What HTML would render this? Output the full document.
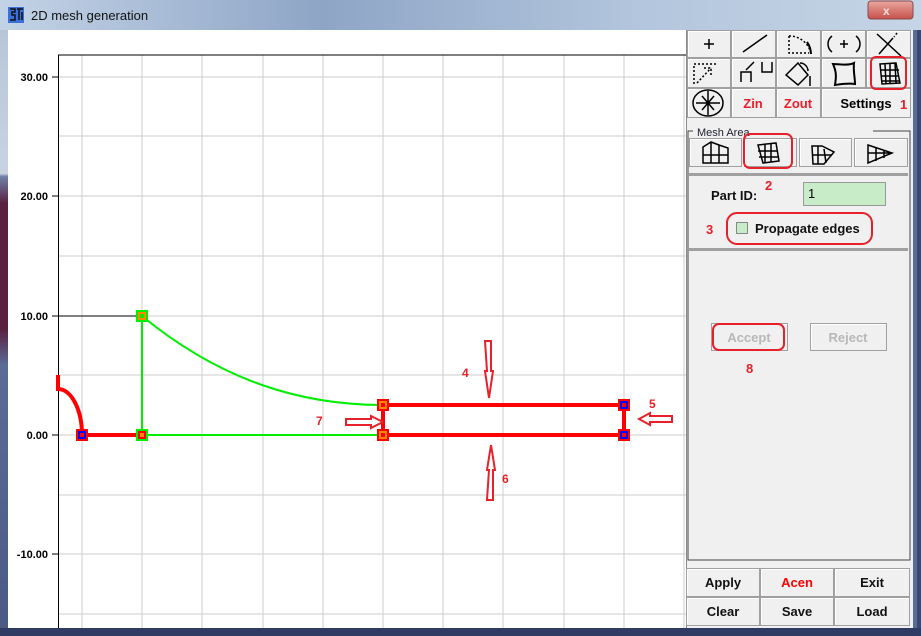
<!DOCTYPE html>
<html><head><meta charset="utf-8"><style>
html,body{margin:0;padding:0;width:921px;height:636px;overflow:hidden;background:#fff}
svg{display:block}
text{font-family:"Liberation Sans",Arial,sans-serif}
.b{fill:#f0f0f0;stroke:#a0a0a0}
.h{stroke:#fff;fill:none}
</style></head><body>
<svg width="921" height="636" viewBox="0 0 921 636" xmlns="http://www.w3.org/2000/svg">
<defs>
<linearGradient id="tb" x1="0" y1="0" x2="1" y2="0">
<stop offset="0" stop-color="#c3d3e6"/><stop offset="0.35" stop-color="#8ea5c6"/><stop offset="0.7" stop-color="#b3c6dd"/><stop offset="1" stop-color="#c6d5e6"/>
</linearGradient>
<linearGradient id="cls" x1="0" y1="0" x2="0" y2="1"><stop offset="0" stop-color="#e8a8a0"/><stop offset="1" stop-color="#c7504a"/></linearGradient>
<linearGradient id="lb" x1="0" y1="0" x2="0" y2="1">
<stop offset="0" stop-color="#b8c6da"/><stop offset="0.24" stop-color="#c8d3e2"/><stop offset="0.245" stop-color="#6f82a8"/><stop offset="0.29" stop-color="#5a2040"/><stop offset="0.5" stop-color="#5a2040"/><stop offset="0.56" stop-color="#5a6c96"/><stop offset="1" stop-color="#4a5a85"/>
</linearGradient>
</defs>
<!-- frame -->
<rect x="0" y="0" width="921" height="636" fill="#2f3b62"/>
<rect x="0" y="0" width="921" height="30" fill="url(#tb)"/>
<rect x="0" y="30" width="8" height="598" fill="url(#lb)"/>
<rect x="913" y="30" width="8" height="598" fill="#5a6c96"/>
<rect x="917" y="30" width="4" height="598" fill="#3a4870"/>
<rect x="0" y="628" width="921" height="8" fill="#2f3b62"/>
<!-- icon -->
<rect x="8" y="7" width="16" height="16" fill="#3d6fd8"/>
<path d="M10 9h5v3h-3v3h3v5h-5M17 9h6M19 9v11M22 12v8" stroke="#111" stroke-width="1.5" fill="none"/>
<text x="31" y="20" font-size="13" fill="#111">2D mesh generation</text>
<rect x="868" y="1" width="45" height="18" rx="3" fill="url(#cls)" stroke="#8a4a4a"/>
<text x="883" y="15" font-size="12" fill="#f4dcdc" font-weight="bold">x</text>
<!-- plot area -->
<rect x="8" y="30" width="678" height="598" fill="#fff"/>
<g stroke="#cccccc" stroke-width="1">
<path d="M82 55V628M142 55V628M202 55V628M263 55V628M323 55V628M383 55V628M443 55V628M503 55V628M564 55V628M624 55V628M684 55V628"/>
<path d="M58 77H686M58 136H686M58 196H686M58 256H686M58 316H686M58 375H686M58 435H686M58 495H686M58 554H686M58 614H686"/>
</g>
<path d="M58.5 55V628M58 55H686" stroke="#000" stroke-width="1"/>
<path d="M52 77H58M52 196H58M52 316H58M52 435H58M52 554H58" stroke="#000"/>
<path d="M58 316H142" stroke="#000"/>
<g font-size="11" font-weight="bold" fill="#000" text-anchor="end">
<text x="48" y="81">30.00</text><text x="48" y="200">20.00</text><text x="48" y="320">10.00</text><text x="48" y="439">0.00</text><text x="48" y="558">-10.00</text>
</g>
<!-- green -->
<path d="M142 316V435H383M142 316C220 380 300 405 383 405" stroke="#00ee00" stroke-width="2" fill="none"/>
<!-- red -->
<path d="M58 375V389A24 46 0 0 1 82 435H142M383 405H624V435H383Z" stroke="#ff0000" stroke-width="4" fill="none"/>
<!-- nodes -->
<rect x="76" y="429" width="12" height="12" fill="#f00"/><rect x="79" y="432" width="6" height="6" fill="none" stroke="#00f" stroke-width="2"/>
<rect x="136" y="429" width="12" height="12" fill="#f00"/><rect x="137" y="430" width="10" height="10" fill="none" stroke="#0e0" stroke-width="2"/><rect x="140" y="433" width="4" height="4" fill="#f80"/>
<rect x="136" y="310" width="12" height="12" fill="#0e0"/><rect x="139" y="313" width="6" height="6" fill="none" stroke="#f80" stroke-width="2"/>
<rect x="377" y="399" width="12" height="12" fill="#f00"/><rect x="380" y="402" width="6" height="6" fill="none" stroke="#f80" stroke-width="2"/>
<rect x="377" y="429" width="12" height="12" fill="#f00"/><rect x="380" y="432" width="6" height="6" fill="none" stroke="#f80" stroke-width="2"/>
<rect x="618" y="399" width="12" height="12" fill="#f00"/><rect x="621" y="402" width="6" height="6" fill="none" stroke="#00f" stroke-width="2"/>
<rect x="618" y="429" width="12" height="12" fill="#f00"/><rect x="621" y="432" width="6" height="6" fill="none" stroke="#00f" stroke-width="2"/>
<!-- arrows -->
<g stroke="#e8202a" stroke-width="2" fill="#fff">
<path d="M485 341h6v30h2l-4 27-4-27h2z"/>
<path d="M487 500h6v-30h2l-4-25-4 25h2z"/>
<path d="M346 419h25v-3l12 6-12 6v-3h-25z"/>
<path d="M672 416h-22v-3l-11 6 11 6v-3h22z"/>
</g>
<g font-size="12" font-weight="bold" fill="#e8202a">
<text x="462" y="377">4</text><text x="649" y="408">5</text><text x="502" y="483">6</text><text x="316" y="425">7</text>
</g>
<!-- right panel -->
<rect x="686" y="30" width="227" height="598" fill="#f0f0f0"/>
<path d="M686.5 30V628" stroke="#888"/>
<g class="b">
<rect x="687.5" y="30.5" width="43" height="27"/><rect x="731.5" y="30.5" width="44" height="27"/><rect x="776.5" y="30.5" width="44" height="27"/><rect x="821.5" y="30.5" width="44" height="27"/><rect x="866.5" y="30.5" width="44" height="27"/>
<rect x="687.5" y="58.5" width="43" height="29"/><rect x="731.5" y="58.5" width="44" height="29"/><rect x="776.5" y="58.5" width="44" height="29"/><rect x="821.5" y="58.5" width="44" height="29"/><rect x="866.5" y="58.5" width="44" height="29"/>
<rect x="687.5" y="88.5" width="43" height="29"/><rect x="731.5" y="88.5" width="44" height="29"/><rect x="776.5" y="88.5" width="44" height="29"/><rect x="821.5" y="88.5" width="89" height="29"/>
</g>
<g class="h">
<path d="M688.5 56V31.5H730M732.5 56V31.5H775M777.5 56V31.5H820M822.5 56V31.5H865M867.5 56V31.5H910"/>
<path d="M688.5 86V59.5H730M732.5 86V59.5H775M777.5 86V59.5H820M822.5 86V59.5H865M867.5 86V59.5H910"/>
<path d="M688.5 116V89.5H730M732.5 116V89.5H775M777.5 116V89.5H820M822.5 116V89.5H910"/>
</g>
<g stroke="#000" stroke-width="1.5" fill="none">
<path d="M704 44h10M709 39v10"/>
<path d="M743 52l24-17"/>
<path d="M789 36a22 22 0 0 1 22 18M789 36v17h20" stroke-dasharray="2 2"/>
<path d="M811 54a22 22 0 0 0-4-12" stroke-width="2"/>
<path d="M832 36a10 10 0 0 0 0 16M856 36a10 10 0 0 1 0 16M840 44h8M844 40v8"/>
<path d="M877 34l24 22M893 38l-14 16" /><path d="M897 33l-3 4" stroke-dasharray="2 2"/>
<path d="M694 84V64h22M697 83l14-15M704 68h7v7" stroke-dasharray="2 2"/>
<path d="M741 82v-10h10v10M746 70l8-8M762 62v10h10v-10"/>
<path d="M786 75l12-12 10 12-10 10zM800 63a8 8 0 0 1 8 8M810 76v10" />
<path d="M833 64c5 0 15 2 21-1-1 8 1 14 1 21-7-1-13 0-20 1 1-7 2-12-2-21z" stroke-width="2"/>
<path d="M693 103a15 13 0 1 0 30 0a15 13 0 1 0-30 0M696 103h24M708 91v24M702 96l12 14M714 96l-12 14"/>
<path d="M880 64l16-1 4 20-18 1zM880 70h19M881 76h18M882 81h17M885 64l1 20M890 63v21M895 63l1 20"/>
</g>
<g font-size="13" font-weight="bold" text-anchor="middle">
<text x="753" y="108" fill="#e8202a">Zin</text><text x="798" y="108" fill="#e8202a">Zout</text><text x="866" y="108" fill="#000">Settings</text>
</g>
<rect x="871" y="57" width="35" height="32" rx="5" fill="none" stroke="#e8202a" stroke-width="2"/>
<text x="900" y="109" font-size="13" font-weight="bold" fill="#e8202a">1</text>
<!-- mesh area -->
<path d="M693 131h-5V560h222V131h-37" stroke="#444" fill="none"/>
<text x="697" y="136" font-size="11" fill="#223">Mesh Area</text>
<g class="b">
<rect x="689.5" y="138.5" width="52" height="28"/><rect x="744.5" y="138.5" width="52" height="28"/><rect x="799.5" y="138.5" width="52" height="28"/><rect x="854.5" y="138.5" width="53" height="28"/>
</g>
<g class="h"><path d="M690.5 165V139.5H741M745.5 165V139.5H796M800.5 165V139.5H851M855.5 165V139.5H907"/></g>
<g stroke="#000" stroke-width="1.5" fill="none">
<path d="M703 163v-16l8-5 8 3 9 3v15zM703 155h25M711 142v21M719 145v18"/>
<path d="M758 145l18-2 3 18-16 2zM758 151h20M759 157h20M765 144v19M771 144v18"/>
<path d="M812 146h10l12 6-10 12h-11zM812 155h20M818 146v18M824 149l2 14"/>
<path d="M868 145l24 8-24 10zM868 153h22M876 147v14M884 150v8"/>
</g>
<rect x="744" y="134" width="48" height="34" rx="6" fill="none" stroke="#e8202a" stroke-width="2"/>
<rect x="689" y="173" width="219" height="3" fill="#a0a0a0"/>
<text x="711" y="200" font-size="13" font-weight="bold" fill="#111">Part ID:</text>
<text x="765" y="190" font-size="13" font-weight="bold" fill="#e8202a">2</text>
<rect x="803.5" y="182.5" width="82" height="23" fill="#c8ecc8" stroke="#999"/>
<text x="808" y="198" font-size="13" fill="#000">1</text>
<text x="706" y="234" font-size="13" font-weight="bold" fill="#e8202a">3</text>
<rect x="727" y="213" width="145" height="31" rx="10" fill="none" stroke="#e8202a" stroke-width="2"/>
<rect x="736.5" y="222.5" width="11" height="11" fill="#c8ecc8" stroke="#888"/>
<text x="755" y="233" font-size="13" font-weight="bold" fill="#111">Propagate edges</text>
<rect x="689" y="248" width="219" height="3" fill="#a0a0a0"/>
<rect x="711.5" y="323.5" width="76" height="27" class="b"/>
<rect x="810.5" y="323.5" width="76" height="27" class="b"/>
<path d="M712.5 349V324.5H787M811.5 349V324.5H886" class="h"/>
<text x="749" y="342" font-size="13" font-weight="bold" fill="#b8b8b8" text-anchor="middle">Accept</text>
<text x="848" y="342" font-size="13" font-weight="bold" fill="#b8b8b8" text-anchor="middle">Reject</text>
<rect x="713" y="324" width="71" height="26" rx="6" fill="none" stroke="#e8202a" stroke-width="2"/>
<text x="746" y="373" font-size="13" font-weight="bold" fill="#e8202a">8</text>
<!-- bottom buttons -->
<g class="b">
<rect x="686.5" y="568.5" width="73" height="28"/><rect x="760.5" y="568.5" width="73" height="28"/><rect x="834.5" y="568.5" width="75" height="28"/>
<rect x="686.5" y="597.5" width="73" height="28"/><rect x="760.5" y="597.5" width="73" height="28"/><rect x="834.5" y="597.5" width="75" height="28"/>
</g>
<g class="h"><path d="M687.5 595V569.5H759M761.5 595V569.5H833M835.5 595V569.5H909M687.5 624V598.5H759M761.5 624V598.5H833M835.5 624V598.5H909"/></g>
<g font-size="13" font-weight="bold" text-anchor="middle" fill="#111">
<text x="723" y="587">Apply</text><text x="797" y="587" fill="#ff0000">Acen</text><text x="872" y="587">Exit</text>
<text x="723" y="616">Clear</text><text x="797" y="616">Save</text><text x="872" y="616">Load</text>
</g>
</svg>
</body></html>
